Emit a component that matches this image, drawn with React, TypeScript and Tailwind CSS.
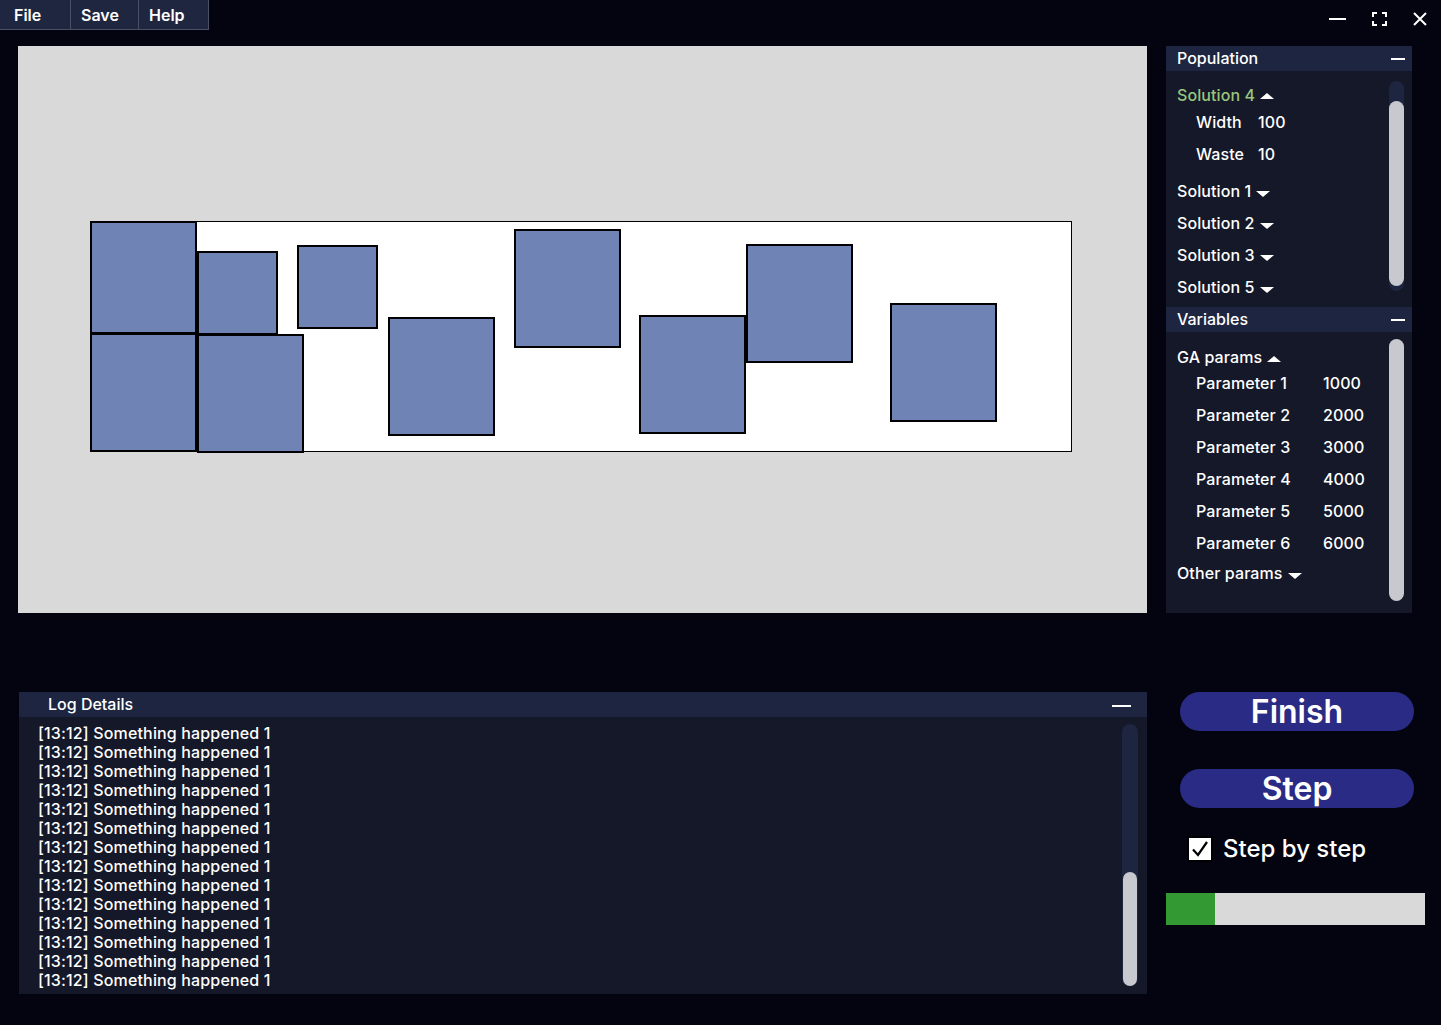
import React from 'react';

const rects = [
  { l: 72, t: 175, w: 107, h: 113 },
  { l: 179, t: 205, w: 81, h: 84 },
  { l: 279, t: 199, w: 81, h: 84 },
  { l: 370, t: 271, w: 107, h: 119 },
  { l: 496, t: 183, w: 107, h: 119 },
  { l: 621, t: 269, w: 107, h: 119 },
  { l: 728, t: 198, w: 107, h: 119 },
  { l: 872, t: 257, w: 107, h: 119 },
  { l: 72, t: 287, w: 107, h: 119 },
  { l: 179, t: 288, w: 107, h: 119 },
];

const params = [
  ['Parameter 1', '1000'],
  ['Parameter 2', '2000'],
  ['Parameter 3', '3000'],
  ['Parameter 4', '4000'],
  ['Parameter 5', '5000'],
  ['Parameter 6', '6000'],
];

function Caret({ up }: { up?: boolean }) {
  return (
    <svg width="14" height="7" viewBox="0 0 14 7" className={up ? 'ml-[5px] mt-[2px]' : 'ml-[5px] mt-[7px]'}>
      {up ? <polygon points="0,7 7,1 14,7" fill="white" /> : <polygon points="0,0 14,0 7,6" fill="white" />}
    </svg>
  );
}

function PanelHeader({ title }: { title: string }) {
  return (
    <div className="h-[25px] bg-[#1e2540] flex items-center justify-between pl-[11px] pr-[7px]">
      <span className="text-[16px] font-medium text-white -mt-[1px]">{title}</span>
      <div className="w-[14px] h-[2px] bg-white" />
    </div>
  );
}

export default function App() {
  return (
    <div className="w-[1441px] h-[1025px] bg-[#03040f] overflow-hidden font-['Inter',sans-serif] text-white flex flex-col">
      {/* top bar */}
      <div className="h-[30px] flex justify-between">
        <div className="flex">
          <div className="w-[71px] h-[30px] pl-[14px] bg-[#1e2640] border-r border-b border-[#4b5064] flex items-center text-[16px] font-semibold">File</div>
          <div className="w-[68px] h-[30px] pl-[10px] bg-[#1e2640] border-r border-b border-[#4b5064] flex items-center text-[16px] font-semibold">Save</div>
          <div className="w-[70px] h-[30px] pl-[10px] bg-[#1e2640] border-r border-b border-[#4b5064] flex items-center text-[16px] font-semibold">Help</div>
        </div>
        <div className="flex items-start pt-[12px] pr-[14px]">
          <div className="w-[17px] h-[2px] bg-white mt-[6px]" />
          <svg width="15" height="14" viewBox="0 0 15 14" className="ml-[26px]" fill="none" stroke="white" strokeWidth="2">
            <path d="M1 5V1H5M10 1H14V5M14 9V13H10M5 13H1V9" />
          </svg>
          <svg width="14" height="14" viewBox="0 0 14 14" className="ml-[26px]" stroke="white" strokeWidth="2">
            <path d="M1 1L13 13M13 1L1 13" />
          </svg>
        </div>
      </div>

      {/* upper area */}
      <div className="flex pt-[16px]">
        <div className="ml-[18px] w-[1129px] h-[567px] bg-[#d9d9d9] relative">
          <div className="absolute left-[72px] top-[175px] w-[982px] h-[231px] bg-white border border-black" />
          {rects.map((r, i) => (
            <div
              key={i}
              className="absolute bg-[#7083b5] border-2 border-black"
              style={{ left: r.l, top: r.t, width: r.w, height: r.h }}
            />
          ))}
        </div>

        <div className="ml-[19px] w-[246px] h-[567px] bg-[#141828] flex flex-col">
          <PanelHeader title="Population" />
          <div className="h-[236px] flex pl-[11px] pr-[8px]">
            <div className="flex-1 text-[16px] font-medium tracking-[0.1px]">
              <div className="mt-[12px] h-[23px] flex items-center text-[#9ac57c]">
                Solution 4
                <Caret up />
              </div>
              <div className="h-[32px] flex items-center pl-[19px]">
                <span className="w-[62px]">Width</span>
                <span>100</span>
              </div>
              <div className="h-[32px] flex items-center pl-[19px]">
                <span className="w-[62px]">Waste</span>
                <span>10</span>
              </div>
              {['Solution 1', 'Solution 2', 'Solution 3', 'Solution 5'].map((s, i) => (
                <div key={s} className={(i === 0 ? 'mt-[5px] ' : '') + 'h-[32px] flex items-center'}>
                  {s}
                  <Caret />
                </div>
              ))}
            </div>
            <div className="w-[15px] mt-[10px] h-[210px] rounded-full bg-[#1e2540] flex flex-col pt-[20px] pb-[5px]">
              <div className="flex-1 rounded-full bg-[#c8c9cf]" />
            </div>
          </div>
          <PanelHeader title="Variables" />
          <div className="flex-1 flex pl-[11px] pr-[8px]">
            <div className="flex-1 text-[16px] font-medium tracking-[0.1px]">
              <div className="mt-[15px] h-[20px] flex items-center">
                GA params
                <Caret up />
              </div>
              {params.map(([k, v]) => (
                <div key={k} className="h-[32px] flex items-center pl-[19px]">
                  <span className="w-[127px]">{k}</span>
                  <span>{v}</span>
                </div>
              ))}
              <div className="h-[28px] flex items-center">
                Other params
                <Caret />
              </div>
            </div>
            <div className="w-[15px] mt-[7px] h-[262px] rounded-full bg-[#c8c9cf]" />
          </div>
        </div>
      </div>

      {/* lower area */}
      <div className="flex mt-[79px]">
        <div className="ml-[19px] w-[1128px] h-[302px] bg-[#141828] flex flex-col">
          <div className="h-[25px] bg-[#1e2540] flex items-center justify-between pl-[29px] pr-[16px]">
            <span className="text-[16px] font-medium -mt-[1px]">Log Details</span>
            <div className="w-[19px] h-[2px] bg-white mt-[2px]" />
          </div>
          <div className="flex-1 flex pl-[19px] pr-[9px]">
            <div className="flex-1 pt-[7px] text-[16px] font-medium leading-[19px] tracking-[0.15px]">
              {Array.from({ length: 14 }).map((_, i) => (
                <div key={i}>[13:12] Something happened 1</div>
              ))}
            </div>
            <div className="w-[16px] mt-[7px] h-[262px] rounded-full bg-[#1e2540] flex flex-col justify-end px-px">
              <div className="h-[114px] rounded-full bg-[#c8c9cf]" />
            </div>
          </div>
        </div>

        <div className="ml-[19px] w-[259px] flex flex-col">
          <div className="ml-[14px] w-[234px] h-[39px] rounded-full bg-[#292b85] flex items-center justify-center text-[32px] font-semibold leading-none">
            Finish
          </div>
          <div className="mt-[38px] ml-[14px] w-[234px] h-[39px] rounded-full bg-[#292b85] flex items-center justify-center text-[32px] font-semibold leading-none">
            Step
          </div>
          <div className="mt-[28px] ml-[21px] h-[26px] flex items-center">
            <div className="w-[26px] h-[26px] bg-white border-2 border-black flex items-center justify-center">
              <svg width="18" height="18" viewBox="0 0 18 18" fill="none" stroke="black" strokeWidth="2.2">
                <path d="M2 9.5L7 15L16 2" />
              </svg>
            </div>
            <span className="ml-[10px] text-[24px] font-medium leading-[26px]">Step by step</span>
          </div>
          <div className="mt-[31px] h-[32px] bg-[#d9d9d9] flex">
            <div className="w-[49px] bg-[#339933]" />
          </div>
        </div>
      </div>
    </div>
  );
}
